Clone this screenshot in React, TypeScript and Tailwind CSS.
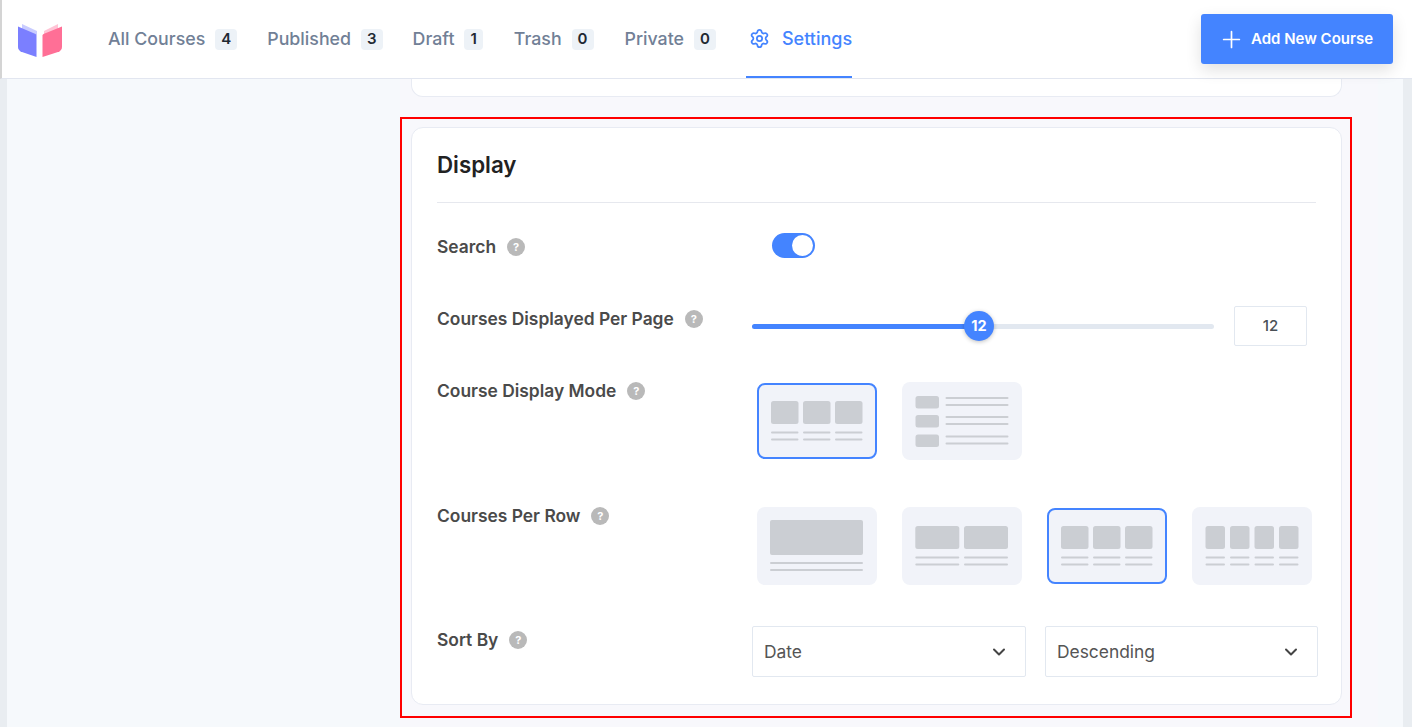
import { ChevronDown, Plus, Settings } from 'lucide-react';

const tabs = [
  { label: 'All Courses', count: 4, ml: 'ml-0' },
  { label: 'Published', count: 3, ml: 'ml-[30px]' },
  { label: 'Draft', count: 1, ml: 'ml-[30px]' },
  { label: 'Trash', count: 0, ml: 'ml-[31px]' },
  { label: 'Private', count: 0, ml: 'ml-[31px]' },
];

function Help() {
  return (
    <span className="ml-[11px] flex h-[18px] w-[18px] shrink-0 items-center justify-center rounded-full bg-[#b9b9b9] text-[11px] font-bold leading-none text-white">
      ?
    </span>
  );
}

function Label({ text }: { text: string }) {
  return (
    <div className="flex w-[315px] shrink-0 items-center text-[17.400px] font-semibold leading-[24px] text-[#4a4a4a]">
      {text}
      <Help />
    </div>
  );
}

function Logo() {
  return (
    <svg width="46" height="38" viewBox="0 0 46 38" fill="none">
      <path d="M5 3l15 7v4H5z" fill="#c9ccff" />
      <path d="M41 3L27 10v4h14z" fill="#ffc4d6" />
      <path d="M1 5.500l17.500 7.500c.6.300 1 .9 1 1.500V36L5 31c-2.500-1-4-2.500-4-5z" fill="#7b7fff" />
      <path d="M45 5.500L26.500 13c-.6.300-1 .9-1 1.500V36l15.500-5c2.500-1 4-2.500 4-5z" fill="#ff6f96" />
    </svg>
  );
}

// thumbnail artwork for the layout pickers
function Blocks({ xs, w }: { xs: number[]; w: number }) {
  return (
    <>
      {xs.map((x) => (
        <g key={x}>
          <rect x={x} y="19" width={w} height="23" rx="2.500" fill="#cbced3" />
          <rect x={x} y="49.500" width={w} height="2" rx="1" fill="#cbced3" />
          <rect x={x} y="56.500" width={w} height="2" rx="1" fill="#cbced3" />
        </g>
      ))}
    </>
  );
}

function ListThumb() {
  return (
    <>
      {[14, 33, 52.5].map((y) => (
        <g key={y}>
          <rect x="13.500" y={y} width="23.500" height="12.500" rx="2.500" fill="#cbced3" />
          <rect x="43.500" y={y + 1} width="63" height="2" rx="1" fill="#cbced3" />
          <rect x="43.500" y={y + 8} width="63" height="2" rx="1" fill="#cbced3" />
        </g>
      ))}
    </>
  );
}

function OneThumb() {
  return (
    <>
      <rect x="13" y="13" width="93" height="35" rx="2" fill="#cbced3" />
      <rect x="13" y="55" width="93" height="2" rx="1" fill="#cbced3" />
      <rect x="13" y="62" width="93" height="2" rx="1" fill="#cbced3" />
    </>
  );
}

function Picker({ active, ml, children }: { active?: boolean; ml: string; children: React.ReactNode }) {
  return (
    <div className={`relative h-[78px] w-[120px] shrink-0 rounded-[8px] ${active ? 'bg-transparent' : 'bg-[#f1f3f9]'} ${ml}`}>
      {active && <div className="absolute inset-x-0 inset-y-px rounded-[8px] border-2 border-[#4484ff] bg-[#f1f3f9]" />}
      <svg className="relative" width="120" height="78" viewBox="0 0 120 78">
        {children}
      </svg>
    </div>
  );
}

function Select({ value, width, ml }: { value: string; width: string; ml: string }) {
  return (
    <div className={`flex h-[51px] shrink-0 items-center justify-between rounded-[2px] border border-[#e2e8f0] bg-white pl-[11px] pr-[16px] text-[17.400px] text-[#555555] ${width} ${ml}`}>
      <span className="pt-px">{value}</span>
      <ChevronDown size={20} strokeWidth={2.4} className="text-[#444444]" />
    </div>
  );
}

export default function App() {
  return (
    <div className="flex h-[727px] w-[1412px] flex-col overflow-hidden bg-[#f6f9fc] font-['Inter',sans-serif]">
      {/* Top bar */}
      <header className="relative z-10 flex h-[79px] shrink-0 items-center border-b border-[#e2e6f0] border-l-2 border-l-[#d4d4d4] bg-white">
        <div className="ml-[15px] w-[91px] pt-px">
          <Logo />
        </div>
        <nav className="flex h-full items-center">
          {tabs.map((tab) => (
            <div key={tab.label} className={`flex items-center ${tab.ml}`}>
              <span className="text-[17.800px] font-medium text-[#718096]">{tab.label}</span>
              <span className="ml-[10px] flex h-[21px] items-center justify-center rounded-[4px] bg-[#edf2f7] px-[6px] text-[15px] font-semibold text-[#1f2933]">
                {tab.count}
              </span>
            </div>
          ))}
          <div className="ml-[30px] flex h-full items-center gap-[12px] border-b-2 border-[#4484ff] pl-[3px] pt-px text-[#4484ff]">
            <Settings size={21} strokeWidth={2} />
            <span className="text-[18px] font-medium">Settings</span>
          </div>
        </nav>
        <button className="absolute left-[1199px] top-[14px] flex h-[50px] w-[192px] items-center rounded-[3px] bg-[#4484ff] pl-[17px] text-[15px] font-semibold text-white shadow-[0_6px_16px_rgba(0,0,0,0.12)]">
          <Plus size={27} strokeWidth={1.5} />
          <span className="ml-[6px]">Add New Course</span>
        </button>
      </header>

      <div className="flex flex-1">
        <div className="w-[7px] shrink-0 bg-[#e9edf1]" />
        <div className="w-[393px] shrink-0" />
        <main className="w-[978px] shrink-0 bg-[#f8f8fc]">
          {/* Bottom of the previous settings card */}
          <div className="ml-[11px] h-[18px] w-[931px] rounded-b-[12px] border border-t-0 border-[#e8ebf3] bg-white" />

          {/* Marked area */}
          <div className="mt-[20px] h-[601px] w-[952px] border-2 border-[#ff0000] pl-[9px] pt-[8px]">
            <section className="h-[578px] w-[931px] rounded-[12px] border border-[#e8ebf3] bg-white pl-[25px] pr-[25px]">
              <h2 className="pt-[22px] text-[22.300px] font-semibold leading-[30px] text-[#222222]">Display</h2>
              <div className="mt-[22px] border-t border-[#e6e8ee]" />

              <div className="mt-[30px] flex h-[25px]">
                <div className="relative top-[2px]">
                  <Label text="Search" />
                </div>
                <div className="relative ml-[20px] h-[25px] w-[43px] rounded-full bg-[#4484ff]">
                  <div className="absolute right-[2px] top-[2px] h-[21px] w-[21px] rounded-full bg-white" />
                </div>
              </div>

              <div className="mt-[48px] flex h-[40px]">
                <div className="mt-[1px]">
                  <Label text="Courses Displayed Per Page" />
                </div>
                <div className="relative mt-[18px] h-[5px] w-[462px] rounded-full bg-[#e2e8f0]">
                  <div className="h-full w-[228px] rounded-full bg-[#4484ff]" />
                  <div className="absolute left-[212px] top-[-13px] flex h-[30px] w-[30px] items-center justify-center rounded-full bg-[#4484ff] text-[14.500px] font-bold text-white shadow-[0_1px_4px_rgba(0,0,0,0.25)]">
                    12
                  </div>
                </div>
                <div className="ml-[20px] flex h-[40px] w-[73px] items-center justify-center rounded-[2px] border border-[#e2e8f0] text-[15px] font-medium text-[#4a5056]">
                  12
                </div>
              </div>

              <div className="mt-[36px] flex">
                <div className="-mt-[3px] self-start">
                  <Label text="Course Display Mode" />
                </div>
                <Picker active ml="ml-[5px]">
                  <Blocks xs={[14, 46, 78]} w={27.5} />
                </Picker>
                <Picker ml="ml-[24.500px]">
                  <ListThumb />
                </Picker>
              </div>

              <div className="mt-[47px] flex">
                <div className="-mt-[3px] self-start">
                  <Label text="Courses Per Row" />
                </div>
                <Picker ml="ml-[5px]">
                  <OneThumb />
                </Picker>
                <Picker ml="ml-[24.500px]">
                  <Blocks xs={[13.3, 62]} w={44} />
                </Picker>
                <Picker active ml="ml-[25.500px]">
                  <Blocks xs={[14, 46, 78]} w={27.5} />
                </Picker>
                <Picker ml="ml-[24.500px]">
                  <Blocks xs={[13.5, 38, 62.5, 87]} w={19.5} />
                </Picker>
              </div>

              <div className="mt-[41px] flex">
                <div className="self-start pt-[2px]">
                  <Label text="Sort By" />
                </div>
                <Select value="Date" width="w-[274px]" ml="ml-0" />
                <Select value="Descending" width="w-[273px]" ml="ml-[19px]" />
              </div>
            </section>
          </div>
        </main>
        <div className="flex-1" />
        <div className="w-[9px] shrink-0 bg-[#e9edf1]" />
      </div>
    </div>
  );
}
